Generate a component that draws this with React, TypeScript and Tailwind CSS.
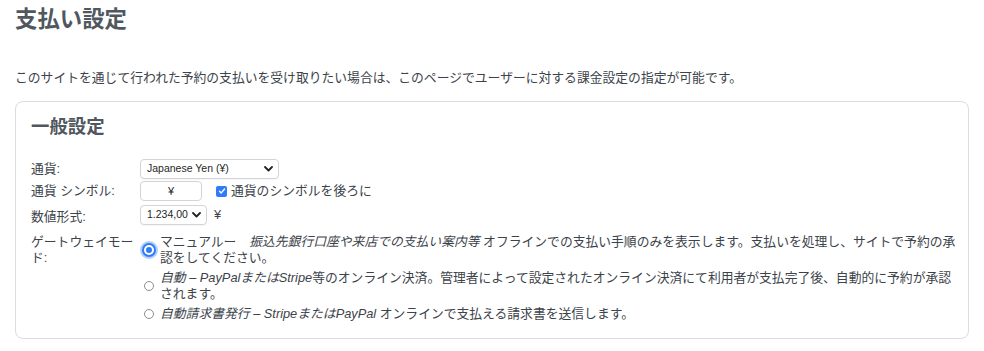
const jp = "font-['Liberation_Sans','Noto_Sans_CJK_JP',sans-serif]";

function Chevron() {
  return (
    <svg width="9" height="6" viewBox="0 0 9 6" className="shrink-0">
      <path d="M1 1l3.5 3.5L8 1" fill="none" stroke="#222" strokeWidth="1.8" strokeLinecap="round" strokeLinejoin="round" />
    </svg>
  );
}

function Select({ label, width }: { label: string; width: string }) {
  return (
    <div
      className={`${width} h-[20px] flex items-center justify-between pl-[6px] pr-[5px] border border-[#d4d4d8] rounded-[4px] bg-white text-[10.5px] text-[#1f1f1f] shadow-[0_1px_1px_rgba(0,0,0,0.04)]`}
    >
      <span>{label}</span>
      <Chevron />
    </div>
  );
}

function Radio({ checked }: { checked?: boolean }) {
  if (checked) {
    return (
      <span className="w-[14px] h-[14px] rounded-full bg-[#2f7cf6] flex items-center justify-center shadow-[0_0_0_2px_#b3cffb]">
        <span className="w-[10px] h-[10px] rounded-full bg-white flex items-center justify-center">
          <span className="w-[6px] h-[6px] rounded-full bg-[#2f7cf6]" />
        </span>
      </span>
    );
  }
  return <span className="w-[10px] h-[10px] rounded-full border border-[#8c8c8c] bg-white" />;
}

function Option({ checked, children }: { checked?: boolean; children: React.ReactNode }) {
  return (
    <div className="flex items-center">
      <div className="w-[18px] mr-[2px] flex justify-center shrink-0">
        <Radio checked={checked} />
      </div>
      <div className="flex-1 leading-[16px]">{children}</div>
    </div>
  );
}

export default function App() {
  return (
    <div className={`${jp} bg-white text-[#3c434a] text-[12.8px] px-[15px] pt-[6px] w-[984px] h-[351px]`}>
      <h1 className="text-[22.4px] leading-[28px] font-bold text-[#50575e]">支払い設定</h1>
      <p className="mt-[35px] leading-[18px]">
        このサイトを通じて行われた予約の支払いを受け取りたい場合は、このページでユーザーに対する課金設定の指定が可能です。
      </p>
      <div className="mt-[14px] border border-[#dcdcde] rounded-[8px] pl-[15px] pr-[9px] pt-[13px] pb-[16px]">
        <h2 className="text-[18.4px] leading-[24px] font-bold text-[#50575e]">一般設定</h2>
        <div className="mt-[20px] grid grid-cols-[104px_1fr] gap-x-[5px] items-start">
          <div className="h-[22px] flex items-center pb-[2px]">通貨:</div>
          <div className="h-[22px]">
            <Select label="Japanese Yen (¥)" width="w-[139px]" />
          </div>

          <div className="h-[24px] flex items-center pb-[4px]">通貨 シンボル:</div>
          <div className="h-[24px] flex items-start gap-[14px]">
            <div className="w-[62px] h-[20px] border border-[#d4d4d8] rounded-[4px] flex items-center justify-center text-[11px] text-[#1f1f1f]">
              ¥
            </div>
            <label className="flex items-center gap-[4px] h-[20px]">
              <span className="w-[11px] h-[11px] rounded-[2px] bg-[#2f7cf6] flex items-center justify-center">
                <svg width="8" height="8" viewBox="0 0 8 8">
                  <path d="M1.5 4.2l1.7 1.7L6.6 2" fill="none" stroke="#fff" strokeWidth="1.4" strokeLinecap="round" strokeLinejoin="round" />
                </svg>
              </span>
              <span>通貨のシンボルを後ろに</span>
            </label>
          </div>

          <div className="h-[29px] flex items-start pt-[2px]">数値形式:</div>
          <div className="h-[29px] flex items-start gap-[7px]">
            <Select label="1.234,00" width="w-[67px]" />
            <span className="leading-[20px]">¥</span>
          </div>

          <div className="leading-[16px]">ゲートウェイモード:</div>
          <div className="flex flex-col gap-[4px]">
            <Option checked>
              マニュアルー　<em>振込先銀行口座や来店での支払い案内等</em> オフラインでの支払い手順のみを表示します。支払いを処理し、サイトで予約の承認をしてください。
            </Option>
            <Option>
              <em>自動 – PayPalまたはStripe</em>等のオンライン決済。管理者によって設定されたオンライン決済にて利用者が支払完了後、自動的に予約が承認されます。
            </Option>
            <Option>
              <em>自動請求書発行 – StripeまたはPayPal</em> オンラインで支払える請求書を送信します。
            </Option>
          </div>
        </div>
      </div>
    </div>
  );
}
